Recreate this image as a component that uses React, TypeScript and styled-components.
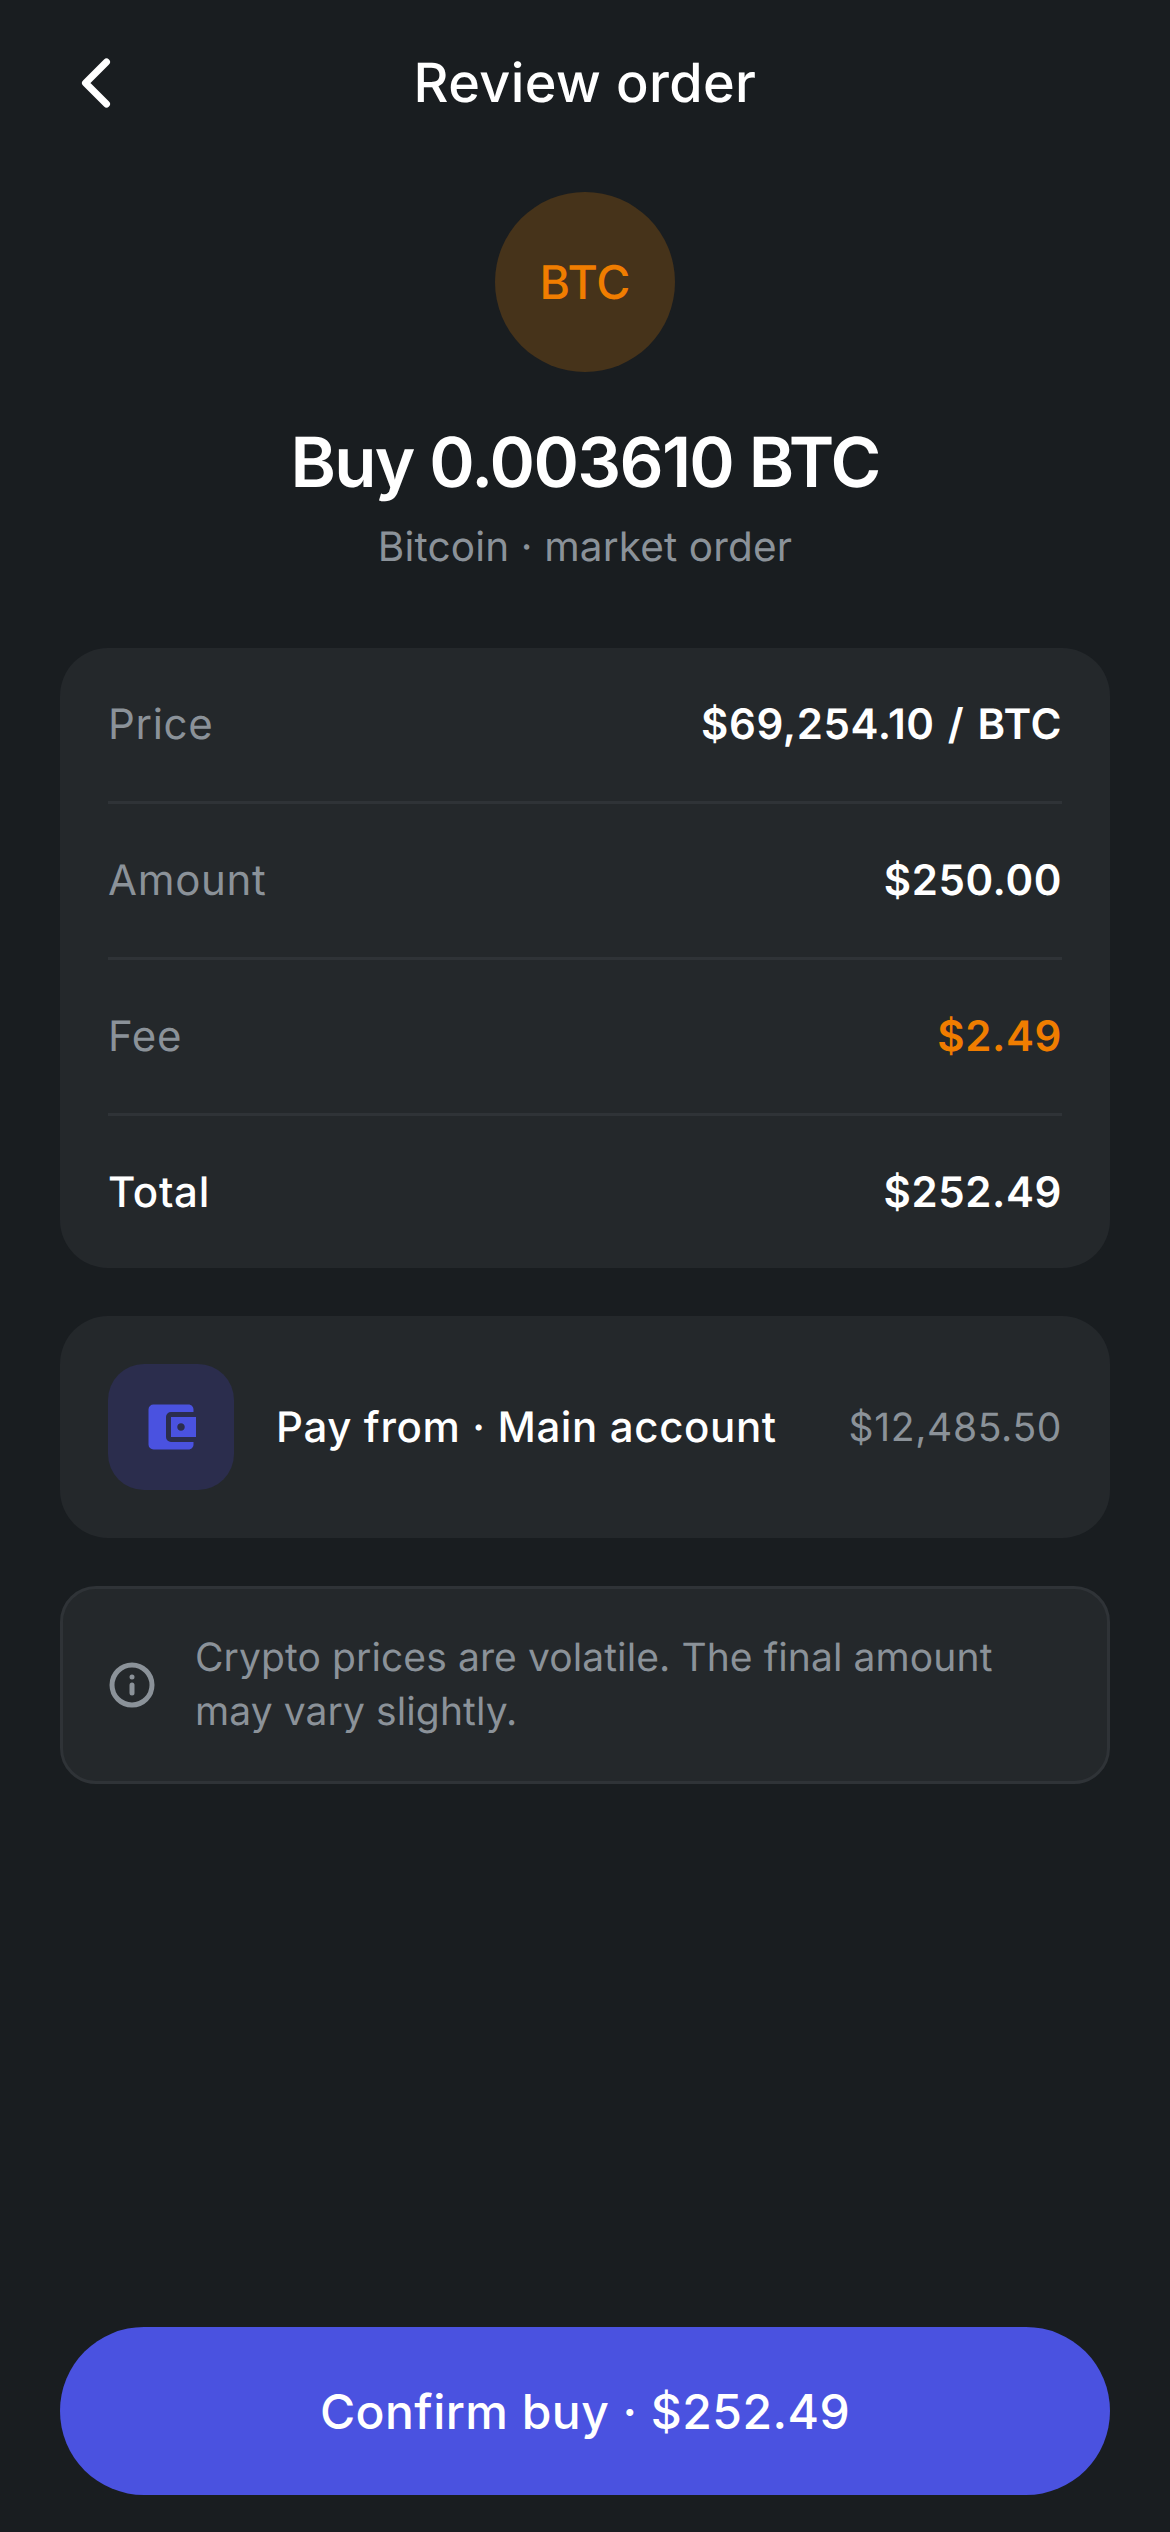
import styled, { createGlobalStyle } from 'styled-components';
import { ChevronLeft, Info } from 'lucide-react';
import { MdAccountBalanceWallet } from 'react-icons/md';

const GlobalStyle = createGlobalStyle`
    * {
        box-sizing: border-box;
    }
    body {
        margin: 0;
        background-color: #191d20;
        font-family: 'Inter', 'Liberation Sans', sans-serif;
        text-rendering: geometricPrecision;
        color: #ffffff;
    }
`;

const Screen = styled.div`
    width: 1170px;
    height: 2532px;
    display: flex;
    flex-direction: column;
    padding: 0 60px 37px;
    background-color: #191d20;
`;

const TopBar = styled.header`
    position: relative;
    height: 84px;
    margin-top: 41px;
    display: flex;
    align-items: center;
    justify-content: center;
`;

const BackButton = styled.button`
    position: absolute;
    left: -6px;
    top: 0;
    width: 84px;
    height: 84px;
    padding: 0;
    border: none;
    background: none;
    color: #ffffff;
`;

const Title = styled.h1`
    margin: 0;
    font-size: 54px;
    font-weight: 500;
    letter-spacing: 0.4px;
`;

const Hero = styled.section`
    display: flex;
    flex-direction: column;
    align-items: center;
    margin-top: 67px;
`;

const CoinBadge = styled.div`
    width: 180px;
    height: 180px;
    padding-top: 2px;
    border-radius: 50%;
    display: flex;
    align-items: center;
    justify-content: center;
    background-color: #46331a;
    color: #f07d00;
    font-size: 46.5px;
    font-weight: 500;
`;

const Headline = styled.h2`
    margin: 40px 0 0;
    font-size: 69px;
    line-height: 100px;
    font-weight: 600;
    letter-spacing: -1.7px;
`;

const Subtitle = styled.p`
    margin: 8px 0 0;
    font-size: 40.5px;
    line-height: 54px;
    letter-spacing: 0.15px;
    color: #8b9299;
`;

const Card = styled.section`
    background-color: #24282b;
    border-radius: 48px;
`;

const SummaryCard = styled(Card)`
    margin-top: 74px;
    padding: 0 48px;
`;

const SummaryRow = styled.div`
    height: 156px;
    display: flex;
    align-items: center;
    justify-content: space-between;
    border-bottom: 3px solid #2f3337;
    &:last-child {
        height: 152px;
        border-bottom: none;
    }
`;

const RowLabel = styled.span<{ $strong?: boolean }>`
    font-size: 42px;
    letter-spacing: 0.7px;
    color: ${({ $strong }) => ($strong ? '#ffffff' : '#8b9299')};
    font-weight: ${({ $strong }) => ($strong ? 500 : 400)};
`;

const RowValue = styled.span<{ $accent?: boolean }>`
    font-size: 42px;
    font-weight: 560;
    letter-spacing: 0.6px;
    word-spacing: 2px;
    color: ${({ $accent }) => ($accent ? '#f07d00' : '#ffffff')};
`;

const PayCard = styled(Card)`
    margin-top: 48px;
    padding: 48px;
    display: flex;
    align-items: center;
`;

const WalletTile = styled.div`
    width: 126px;
    height: 126px;
    flex: none;
    border-radius: 36px;
    display: flex;
    align-items: center;
    justify-content: center;
    background-color: #2b2d4d;
    color: #4a52e0;
`;

const PayLabel = styled.span`
    margin-left: 42px;
    flex: 1;
    font-size: 42px;
    font-weight: 500;
    letter-spacing: 0.63px;
`;

const PayBalance = styled.span`
    font-size: 39px;
    letter-spacing: 0.65px;
    color: #8b9299;
`;

const Notice = styled.aside`
    margin-top: 48px;
    padding: 42px 45px;
    display: flex;
    align-items: center;
    gap: 39px;
    background-color: #24282b;
    border: 3px solid #2f3337;
    border-radius: 36px;
    color: #8b9299;
    svg {
        flex: none;
    }
`;

const NoticeText = styled.p`
    margin: 0;
    font-size: 39px;
    line-height: 54px;
    letter-spacing: 0.1px;
`;

const ConfirmButton = styled.button`
    margin-top: auto;
    height: 168px;
    width: 100%;
    border: none;
    border-radius: 84px;
    background-color: #4a52e0;
    color: #ffffff;
    font-family: inherit;
    font-size: 48px;
    font-weight: 500;
    letter-spacing: 0.46px;
`;

const rows = [
    { label: 'Price', value: '$69,254.10 / BTC' },
    { label: 'Amount', value: '$250.00' },
    { label: 'Fee', value: '$2.49', accent: true },
    { label: 'Total', value: '$252.49', strong: true },
];

export default function App() {
    return (
        <>
            <GlobalStyle />
            <Screen>
                <TopBar>
                    <BackButton aria-label="Back">
                        <ChevronLeft size={84} strokeWidth={2} />
                    </BackButton>
                    <Title>Review order</Title>
                </TopBar>
                <Hero>
                    <CoinBadge>BTC</CoinBadge>
                    <Headline>Buy 0.003610 BTC</Headline>
                    <Subtitle>Bitcoin · market order</Subtitle>
                </Hero>
                <SummaryCard>
                    {rows.map((row) => (
                        <SummaryRow key={row.label}>
                            <RowLabel $strong={row.strong}>{row.label}</RowLabel>
                            <RowValue $accent={row.accent}>{row.value}</RowValue>
                        </SummaryRow>
                    ))}
                </SummaryCard>
                <PayCard>
                    <WalletTile>
                        <MdAccountBalanceWallet size={60} />
                    </WalletTile>
                    <PayLabel>Pay from · Main account</PayLabel>
                    <PayBalance>$12,485.50</PayBalance>
                </PayCard>
                <Notice>
                    <Info size={48} strokeWidth={2.5} />
                    <NoticeText>
                        Crypto prices are volatile. The final amount
                        <br />
                        may vary slightly.
                    </NoticeText>
                </Notice>
                <ConfirmButton>Confirm buy · $252.49</ConfirmButton>
            </Screen>
        </>
    );
}
